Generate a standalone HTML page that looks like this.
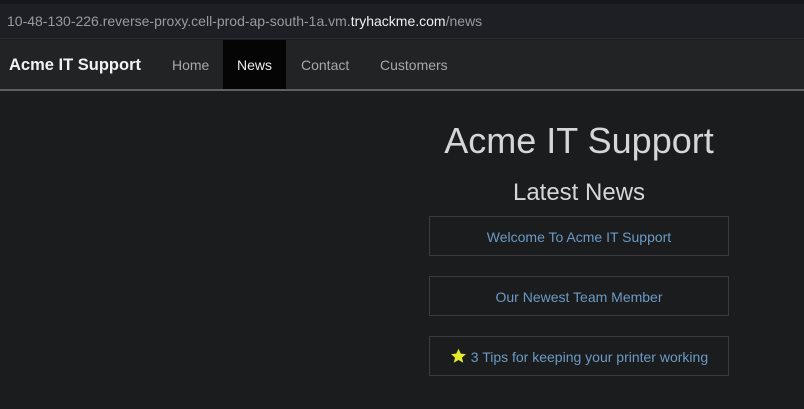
<!DOCTYPE html>
<html><head><meta charset="utf-8"><style>
*{margin:0;padding:0;box-sizing:border-box}
html,body{width:804px;height:409px;overflow:hidden;background:#1b1c1e;font-family:"Liberation Sans",sans-serif}
.top{height:4px;background:#15161a}
.url{height:34px;background:#1e1f24;color:#9a9a9e;font-size:14px;line-height:34px;padding-left:7px}
.url b{font-weight:normal;color:#f0f0f0}
.sep{height:1px;background:#2c2d31}
.nav{position:absolute;top:40px;left:0;width:804px;height:51px;background:#222325;border-bottom:2px solid #5e5f61}
.brand{position:absolute;left:9px;top:0;line-height:51px;color:#f2f2f2;font-size:16.5px;font-weight:600}
.nav a{position:absolute;top:0;height:49px;line-height:51px;color:#a8a8a8;font-size:14px;text-decoration:none}
.nav a.act{background:#050505;color:#ececec;text-align:center}
h1{position:absolute;left:429px;width:300px;top:120px;text-align:center;font-weight:normal;color:#d6d6d6;font-size:36px;white-space:nowrap}
h2{position:absolute;left:429px;width:300px;top:179px;text-align:center;font-weight:normal;color:#d6d6d6;font-size:24px}
.box{position:absolute;left:429px;width:300px;height:40px;border:1px solid #3a3b3e;color:#6b9ac4;font-size:14px;text-align:center;line-height:40px}
</style></head><body>
<div class="top"></div>
<div class="url">10-48-130-226.reverse-proxy.cell-prod-ap-south-1a.vm.<b>tryhackme.com</b>/news</div>
<div class="sep"></div>
<div class="nav">
<div class="brand">Acme IT Support</div>
<a style="left:172px">Home</a>
<a class="act" style="left:223px;width:63px">News</a>
<a style="left:301px">Contact</a>
<a style="left:380px">Customers</a>
</div>
<h1>Acme IT Support</h1>
<h2>Latest News</h2>
<div class="box" style="top:216px">Welcome To Acme IT Support</div>
<div class="box" style="top:276px">Our Newest Team Member</div>
<div class="box" style="top:336px"><svg width="17" height="17" viewBox="0 0 24 24" style="vertical-align:-3px"><path d="M12 1l3.2 7 7.3.6-5.6 4.9 1.8 7.3L12 16.9 5.3 20.8l1.8-7.3L1.5 8.6 8.8 8z" fill="#e6ea2c"/></svg> 3 Tips for keeping your printer working</div>
</body></html>
